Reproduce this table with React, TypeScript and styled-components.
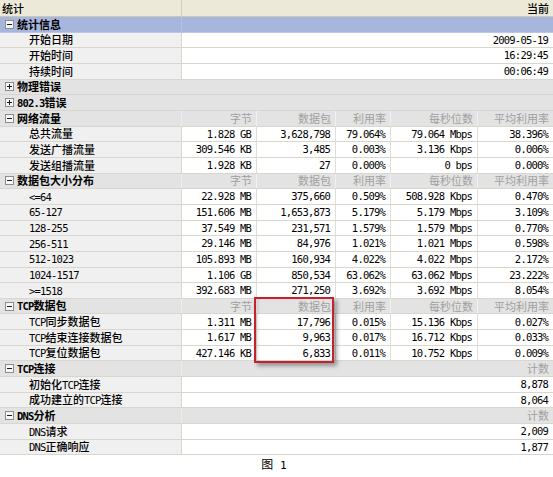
import React from "react";
import styled, { createGlobalStyle } from "styled-components";

const CJK = `"Noto Sans CJK SC", "Noto Sans", sans-serif`;
const MONO = `"DejaVu Sans Mono", "Liberation Mono", monospace`;

const Global = createGlobalStyle`
  html, body { margin: 0; padding: 0; background: #fff; }
  body { font-family: ${CJK}; font-size: 11px; font-weight: 500; color: #000; }
`;

const COLS = "182px 75px 79px 55px 87px 75px";
const ROW_H = 15.67;

const Page = styled.div`
  width: 553px;
`;

const TableWrap = styled.div`
  position: relative;
`;

const HeaderRow = styled.div`
  display: grid;
  grid-template-columns: 182px 1fr;
  height: 17px;
  box-sizing: border-box;
  background: #ece9d8;
  border-bottom: 1px solid #cbc7b7;
`;

const HeaderCell = styled.div<{ $right?: boolean }>`
  display: flex;
  align-items: center;
  justify-content: ${(p) => (p.$right ? "flex-end" : "flex-start")};
  padding: ${(p) => (p.$right ? "0 4px 0 0" : "0 0 0 2px")};
  border-right: ${(p) => (p.$right ? "none" : "1px solid #d3cfc0")};
  line-height: 1;
`;

type Variant = "data" | "section" | "selected";

const Row = styled.div<{ $variant: Variant }>`
  display: grid;
  grid-template-columns: ${COLS};
  height: ${ROW_H}px;
  box-sizing: border-box;
  border-bottom: 1px solid ${(p) => (p.$variant === "selected" ? "#bcc7e3" : "#d9d6cb")};
  background: ${(p) =>
    p.$variant === "selected" ? "#a6b6dc" : p.$variant === "section" ? "#e3e3e3" : "#fff"};
`;

const LabelCell = styled.div`
  display: flex;
  align-items: center;
  padding-left: 29px;
  background: #f0f0f0;
  border-right: 1px solid #d9d6cb;
  white-space: nowrap;
  line-height: 1;
`;

const SectionLabel = styled.div<{ $full?: boolean; $variant: Variant }>`
  display: flex;
  align-items: center;
  gap: 3px;
  padding-left: 5px;
  font-weight: 700;
  white-space: nowrap;
  line-height: 1;
  grid-column: ${(p) => (p.$full ? "1 / -1" : "auto")};
  border-right: ${(p) =>
    p.$full ? "none" : p.$variant === "selected" ? "1px solid #b4c1e0" : "1px solid #ededed"};
`;

const ValueCell = styled.div<{ $span?: number; $last?: boolean }>`
  display: flex;
  align-items: center;
  justify-content: flex-end;
  padding-right: 5px;
  grid-column: span ${(p) => p.$span ?? 1};
  border-right: ${(p) => (p.$last ? "none" : "1px solid #e0ded6")};
  white-space: nowrap;
  line-height: 1;
  font-family: ${MONO};
  font-weight: 400;
  font-size: 10.5px;
  letter-spacing: -0.8px;
`;

const ColHead = styled.div<{ $span?: number; $last?: boolean }>`
  display: flex;
  align-items: center;
  justify-content: flex-end;
  padding-right: 4px;
  grid-column: span ${(p) => p.$span ?? 1};
  border-right: ${(p) => (p.$last ? "none" : "1px solid #f1f1f1")};
  color: #a0a0a0;
  font-weight: 400;
  white-space: nowrap;
  line-height: 1;
`;

const Latin = styled.span`
  font-family: ${MONO};
  font-size: 10.5px;
  letter-spacing: -0.8px;
`;

const Callout = styled.div`
  position: absolute;
  left: 254px;
  top: 297px;
  width: 80px;
  height: 66px;
  box-sizing: border-box;
  border: 2px solid #c4232b;
  box-shadow: 3px 3px 4px rgba(0, 0, 0, 0.35), inset 3px 0 4px -2px rgba(0, 0, 0, 0.18);
  pointer-events: none;
`;

const Caption = styled.div`
  padding: 2px 5px 0 0;
  text-align: center;
  font-size: 12px;
  font-weight: 400;
  line-height: 14px;
`;

const CaptionNum = styled.span`
  font-family: ${MONO};
  font-size: 11px;
`;

const Mixed = ({ text }: { text: string }) => {
  const parts = text.match(/[\x00-\x7f]+|[^\x00-\x7f]+/g) || [];
  return (
    <span>
      {parts.map((p, i) =>
        /^[\x00-\x7f]/.test(p) ? <Latin key={i}>{p}</Latin> : <span key={i}>{p}</span>
      )}
    </span>
  );
};

const Toggle = ({ collapsed }: { collapsed?: boolean }) => (
  <svg width="9" height="9" viewBox="0 0 9 9" style={{ flex: "none" }}>
    <rect x="0.5" y="0.5" width="8" height="8" fill="#f7f7f7" stroke="#8d8d8d" />
    <line x1="2" y1="4.5" x2="7" y2="4.5" stroke="#1a1a1a" />
    {collapsed && <line x1="4.5" y1="2" x2="4.5" y2="7" stroke="#1a1a1a" />}
  </svg>
);

type DataRow = { label: string; values: string[] };
type Section = {
  title: string;
  variant: "section" | "selected";
  collapsed?: boolean;
  heads?: string[];
  rows?: DataRow[];
};

const FULL_HEADS = ["字节", "数据包", "利用率", "每秒位数", "平均利用率"];

const SECTIONS: Section[] = [
  {
    title: "统计信息",
    variant: "selected",
    heads: [""],
    rows: [
      { label: "开始日期", values: ["2009-05-19"] },
      { label: "开始时间", values: ["16:29:45"] },
      { label: "持续时间", values: ["00:06:49"] },
    ],
  },
  { title: "物理错误", variant: "section", collapsed: true },
  { title: "802.3错误", variant: "section", collapsed: true },
  {
    title: "网络流量",
    variant: "section",
    heads: FULL_HEADS,
    rows: [
      { label: "总共流量", values: ["1.828 GB", "3,628,798", "79.064%", "79.064 Mbps", "38.396%"] },
      { label: "发送广播流量", values: ["309.546 KB", "3,485", "0.003%", "3.136 Kbps", "0.006%"] },
      { label: "发送组播流量", values: ["1.928 KB", "27", "0.000%", "0 bps", "0.000%"] },
    ],
  },
  {
    title: "数据包大小分布",
    variant: "section",
    heads: FULL_HEADS,
    rows: [
      { label: "<=64", values: ["22.928 MB", "375,660", "0.509%", "508.928 Kbps", "0.470%"] },
      { label: "65-127", values: ["151.606 MB", "1,653,873", "5.179%", "5.179 Mbps", "3.109%"] },
      { label: "128-255", values: ["37.549 MB", "231,571", "1.579%", "1.579 Mbps", "0.770%"] },
      { label: "256-511", values: ["29.146 MB", "84,976", "1.021%", "1.021 Mbps", "0.598%"] },
      { label: "512-1023", values: ["105.893 MB", "160,934", "4.022%", "4.022 Mbps", "2.172%"] },
      { label: "1024-1517", values: ["1.106 GB", "850,534", "63.062%", "63.062 Mbps", "23.222%"] },
      { label: ">=1518", values: ["392.683 MB", "271,250", "3.692%", "3.692 Mbps", "8.054%"] },
    ],
  },
  {
    title: "TCP数据包",
    variant: "section",
    heads: FULL_HEADS,
    rows: [
      { label: "TCP同步数据包", values: ["1.311 MB", "17,796", "0.015%", "15.136 Kbps", "0.027%"] },
      { label: "TCP结束连接数据包", values: ["1.617 MB", "9,963", "0.017%", "16.712 Kbps", "0.033%"] },
      { label: "TCP复位数据包", values: ["427.146 KB", "6,833", "0.011%", "10.752 Kbps", "0.009%"] },
    ],
  },
  {
    title: "TCP连接",
    variant: "section",
    heads: ["计数"],
    rows: [
      { label: "初始化TCP连接", values: ["8,878"] },
      { label: "成功建立的TCP连接", values: ["8,064"] },
    ],
  },
  {
    title: "DNS分析",
    variant: "section",
    heads: ["计数"],
    rows: [
      { label: "DNS请求", values: ["2,009"] },
      { label: "DNS正确响应", values: ["1,877"] },
    ],
  },
];

export default function App() {
  return (
    <Page>
      <Global />
      <TableWrap>
        <HeaderRow>
          <HeaderCell>统计</HeaderCell>
          <HeaderCell $right>当前</HeaderCell>
        </HeaderRow>
        {SECTIONS.map((s) => (
          <React.Fragment key={s.title}>
            <Row $variant={s.variant}>
              <SectionLabel $full={s.collapsed} $variant={s.variant}>
                <Toggle collapsed={s.collapsed} />
                <Mixed text={s.title} />
              </SectionLabel>
              {!s.collapsed &&
                s.heads?.map((h, i, arr) => (
                  <ColHead key={i} $span={arr.length === 1 ? 5 : 1} $last={i === arr.length - 1}>
                    {h}
                  </ColHead>
                ))}
            </Row>
            {s.rows?.map((r) => (
              <Row $variant="data" key={r.label}>
                <LabelCell>
                  <Mixed text={r.label} />
                </LabelCell>
                {r.values.map((v, i, arr) => (
                  <ValueCell key={i} $span={arr.length === 1 ? 5 : 1} $last={i === arr.length - 1}>
                    {v}
                  </ValueCell>
                ))}
              </Row>
            ))}
          </React.Fragment>
        ))}
        <Callout />
      </TableWrap>
      <Caption>
        图<CaptionNum> 1</CaptionNum>
      </Caption>
    </Page>
  );
}
